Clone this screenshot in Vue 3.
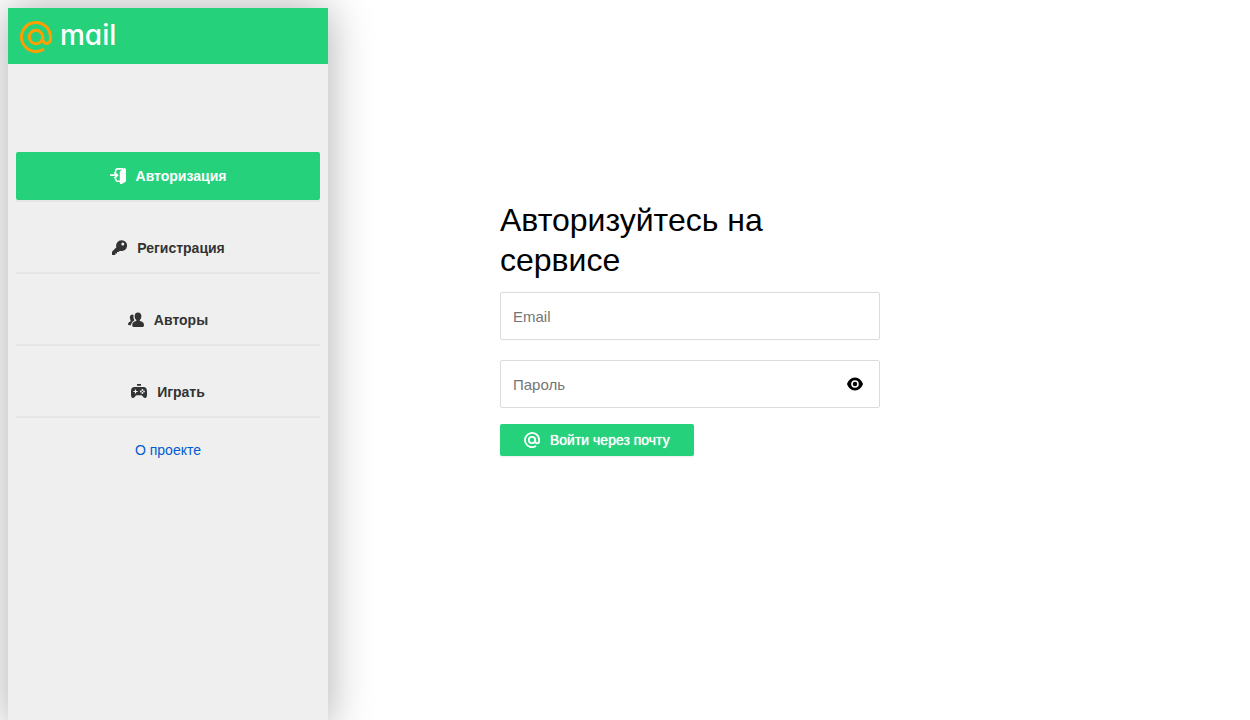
<script setup>
import { ref } from 'vue'

const email = ref('')
const password = ref('')
const visible = ref(false)

const items = [
  { id: 'login', label: 'Авторизация', active: true },
  { id: 'signup', label: 'Регистрация', active: false },
  { id: 'authors', label: 'Авторы', active: false },
  { id: 'play', label: 'Играть', active: false },
]
</script>

<template>
  <div class="page">
    <aside class="sidebar">
      <header class="brand">
        <svg class="brand-mark" viewBox="0 0 32 32" aria-hidden="true">
          <circle cx="16" cy="16" r="6.7" />
          <path d="M22.7 16v2.5a3.9 3.9 0 0 0 7.8 0V16A14.5 14.5 0 1 0 24 28.1" />
        </svg>
        <span class="brand-name">mail</span>
      </header>
      <nav class="menu">
        <div v-for="item in items" :key="item.id" class="menu-row">
          <button type="button" class="menu-button" :class="{ active: item.active }">
            <svg v-if="item.id === 'login'" class="icon" viewBox="0 0 16 16" aria-hidden="true">
              <path fill="none" stroke="currentColor" stroke-width="1.6" d="M5.8 3.800V2.600Q5.800.900 7.500.900h6M5.800 10.600v1Q5.800 13.200 7.500 13.200h3" />
              <path d="M9.800 4.200Q9.800 3 11 2.400L14.500.100Q16 .200 16 2v10.400q0 1-.8 1.500l-3.600 2q-1.800.5-1.800-1z" />
              <path fill="none" stroke="currentColor" stroke-width="1.8" d="M0 7.200h7M4.300 4.100 7.400 7.200 4.300 10.300" />
            </svg>
            <svg v-else-if="item.id === 'signup'" class="icon" viewBox="0 0 16 16" aria-hidden="true">
              <path fill-rule="evenodd" d="M10.600.200a5.400 5.400 0 1 1-1.700 10.500L7.700 12H6v1.600H4.300V15H1.500Q1 15 1 14.500V11.700L5.400 7.300A5.400 5.400 0 0 1 10.600.200zM11.800 2.600a1.500 1.500 0 1 0 0 3 1.500 1.500 0 0 0 0-3z" />
            </svg>
            <svg v-else-if="item.id === 'authors'" class="icon" viewBox="0 0 16 16" aria-hidden="true">
              <path d="M10 .400c2.100 0 3.400 1.400 3.400 3.700 0 1.800-.7 3.200-1.600 4v1c2.700.5 4.200 1.800 4.200 3.900 0 1.400-.6 2-2 2H6.200c-1.400 0-2-.6-2-2 0-2.100 1.500-3.400 4.100-3.900v-1C7.300 7.300 6.600 5.900 6.600 4.100 6.600 1.800 7.900.400 10 .400z" />
              <path d="M5.500 3Q5 6 6.400 8.200 3.300 9.700 2.700 13.200H1.200Q0 13.200 0 12 0 10.100 2.600 9.200V8.200C1.400 6.500 1.600 2.600 4.200 2.600Q5 2.600 5.500 3z" />
            </svg>
            <svg v-else class="icon" viewBox="0 0 16 16" aria-hidden="true">
              <path fill-rule="evenodd" d="M6 0h4v1.800H6zM3.800 2.900h8.400C14.800 2.900 16 4.200 16 7.500v3.200c0 2.300-.9 3.400-2.200 3.400-1.700 0-1.900-2.800-3.400-2.800H5.600c-1.500 0-1.700 2.800-3.400 2.800C.9 14.100 0 13 0 10.700V7.500C0 4.200 1.200 2.900 3.800 2.900zM3.900 5.500v1.400H2.400v1.200h1.500v1.500h1.200V8.100h1.500V6.900H5.100V5.500zm7.500-.4a.9.900 0 1 0 0 1.800.9.900 0 0 0 0-1.800zm0 3a.9.900 0 1 0 0 1.800.9.900 0 0 0 0-1.800zM9.800 6.600a.9.900 0 1 0 0 1.800.9.900 0 0 0 0-1.800zm3.200 0a.9.900 0 1 0 0 1.800.9.900 0 0 0 0-1.800z" />
            </svg>
            <span>{{ item.label }}</span>
          </button>
        </div>
      </nav>
      <a class="about" href="#about">О проекте</a>
    </aside>

    <main class="content">
      <form class="login" @submit.prevent>
        <h1>Авторизуйтесь на сервисе</h1>
        <input v-model="email" class="field" type="email" placeholder="Email" aria-label="Email" />
        <div class="password">
          <input v-model="password" class="field" :type="visible ? 'text' : 'password'" placeholder="Пароль" aria-label="Пароль" />
          <button type="button" class="eye" aria-label="Показать пароль" @click="visible = !visible">
            <svg class="icon" viewBox="0 0 16 16" aria-hidden="true">
              <path fill-rule="evenodd" d="M8 1.500c4 0 6.800 3 8 6.500-1.200 3.500-4 6.500-8 6.500S1.200 11.500 0 8C1.200 4.500 4 1.500 8 1.500zM8 4.200a3.800 3.800 0 1 0 0 7.600 3.800 3.800 0 0 0 0-7.600z" />
              <circle cx="8" cy="8" r="2.200" />
            </svg>
          </button>
        </div>
        <button type="submit" class="submit">
          <svg class="icon at" viewBox="0 0 16 16" aria-hidden="true">
            <circle cx="8" cy="8" r="3.200" />
            <path d="M11.200 8v1.300a2 2 0 0 0 4 0V8A7.100 7.100 0 1 0 12 14" />
          </svg>
          <span>Войти через почту</span>
        </button>
      </form>
    </main>
  </div>
</template>

<style>
body {
  margin: 0;
  background: #fff;
}
</style>

<style scoped>
.page {
  display: flex;
  height: 100vh;
  padding: 8px;
  box-sizing: border-box;
  font-family: "Liberation Sans", Arial, sans-serif;
  color: #000;
  overflow: hidden;
}
.sidebar {
  display: flex;
  flex-direction: column;
  flex: 0 0 320px;
  height: 100vh;
  background: #efefef;
  box-shadow: 0 0 42px rgba(0, 0, 0, 0.32);
}
.brand {
  display: flex;
  align-items: center;
  gap: 8px;
  height: 56px;
  padding: 0 12px;
  background: #26d17c;
}
.brand-mark {
  width: 32px;
  height: 32px;
  margin-top: 2px;
  fill: none;
  stroke: #ff9e00;
  stroke-width: 3;
  stroke-linecap: butt;
}
.brand-name {
  margin-bottom: 2px;
  font: 500 28px/32px Inter, sans-serif;
  font-feature-settings: "cv11" 1;
  color: #fff;
}
.menu {
  display: grid;
  gap: 22px;
  padding: 88px 8px 0;
}
.menu-row {
  border-bottom: 2px solid #e5e5e5;
}
.menu-button {
  display: flex;
  align-items: center;
  justify-content: center;
  gap: 10px;
  width: 100%;
  height: 48px;
  padding: 0;
  border: 0;
  border-radius: 2px;
  background: transparent;
  color: #333;
  font: bold 14px/20px "Liberation Sans", Arial, sans-serif;
  cursor: pointer;
}
.menu-button.active {
  background: #26d17c;
  color: #fff;
}
.icon {
  display: block;
  flex: none;
  width: 16px;
  height: 16px;
  fill: currentColor;
}
.about {
  align-self: center;
  margin-top: 22px;
  color: #005bd1;
  font-size: 14px;
  line-height: 20px;
  text-decoration: none;
}
.content {
  flex: 1;
  padding: 192px 24px 0 172px;
}
.login {
  display: flex;
  flex-direction: column;
  align-items: flex-start;
  max-width: 380px;
}
h1 {
  max-width: 320px;
  margin: 0 0 12px;
  font-size: 32px;
  line-height: 40px;
  font-weight: normal;
}
.field {
  width: 100%;
  height: 48px;
  padding: 0 12px;
  box-sizing: border-box;
  border: 1px solid #dcdcdc;
  border-radius: 2px;
  background: #fff;
  font: 15px/20px "Liberation Sans", Arial, sans-serif;
  outline: none;
}
.field::placeholder {
  color: #757575;
}
.password {
  position: relative;
  width: 100%;
  margin: 20px 0 16px;
}
.eye {
  position: absolute;
  top: 16px;
  right: 17px;
  padding: 0;
  border: 0;
  background: none;
  color: #000;
  cursor: pointer;
}
.submit {
  display: flex;
  align-items: center;
  gap: 10px;
  height: 32px;
  padding: 0 24px;
  border: 0;
  border-radius: 2px;
  background: #26d17c;
  box-shadow: 0 1px 2px rgba(0, 0, 0, 0.08);
  color: #fff;
  font: 14px/20px "Liberation Sans", Arial, sans-serif;
  text-shadow: 0 0 1px #fff;
  cursor: pointer;
}
.at {
  fill: none;
  stroke: currentColor;
  stroke-width: 1.8;
}
</style>
